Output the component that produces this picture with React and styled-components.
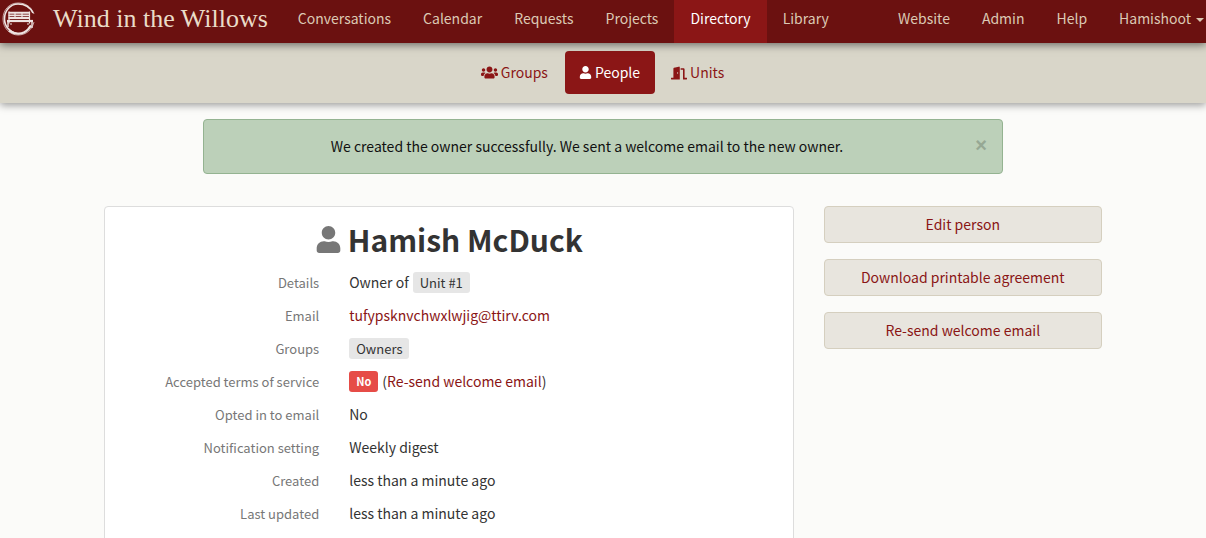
import React from "react";
import styled, { createGlobalStyle } from "styled-components";
import { FaUser, FaUsers, FaDoorOpen } from "react-icons/fa";

const GlobalStyle = createGlobalStyle`
  *, *::before, *::after { box-sizing: border-box; }
  body {
    margin: 0;
    background: #fbfbf9;
    color: #333;
    font-family: "Noto Sans CJK SC", "Noto Sans", sans-serif;
    font-size: 14px;
    line-height: 25px;
  }
  a { color: #8a1515; text-decoration: none; }
`;

const NavBar = styled.nav`
  position: relative;
  z-index: 2;
  display: flex;
  align-items: stretch;
  height: 43px;
  background: #6b1110;
  box-shadow: 0 2px 8px rgba(0, 0, 0, 0.5);
`;

const Brand = styled.a`
  display: flex;
  align-items: center;
  gap: 17px;
  padding: 0 14px 6px 2px;
  color: #eadcc8;
  font-family: "Liberation Serif", serif;
  font-size: 26px;
  line-height: 36px;
  white-space: nowrap;
`;

const NavGroup = styled.div`
  display: flex;
  margin-left: ${(p) => (p.$end ? "auto" : "0")};
`;

const NavLink = styled.a`
  display: flex;
  align-items: center;
  padding: 0 16px 6px;
  color: ${(p) => (p.$active ? "#fff" : "#dcc9b4")};
  background: ${(p) => (p.$active ? "#8b1616" : "transparent")};
  white-space: nowrap;
`;

const MenuButton = styled.button`
  display: flex;
  align-items: center;
  gap: 5px;
  padding: 0 2px 6px 16px;
  border: 0;
  background: transparent;
  color: #dcc9b4;
  font: inherit;
`;

const Caret = styled.span`
  border: 4px solid transparent;
  border-top-color: currentColor;
  border-bottom: 0;
  margin-top: 2px;
`;

const SubNav = styled.nav`
  display: flex;
  justify-content: center;
  gap: 2px;
  padding: 8px 0 9px;
  background: #d9d6c9;
  box-shadow: 0 2px 8px rgba(0, 0, 0, 0.4);
`;

const SubLink = styled.a`
  display: flex;
  align-items: center;
  gap: 3px;
  height: 43px;
  padding: 0 15px 0 14px;
  border-radius: 4px;
  color: ${(p) => (p.$active ? "#fff" : "#8b1616")};
  background: ${(p) => (p.$active ? "#8b1616" : "transparent")};
`;

const Alert = styled.div`
  display: flex;
  align-items: center;
  max-width: 800px;
  margin: 16px auto 32px;
  padding: 14px 10px 14px 0;
  border: 1px solid #94b391;
  border-radius: 4px;
  background: #bcd0b9;
  color: #111;
`;

const AlertText = styled.span`
  flex: 1;
  text-align: center;
`;

const CloseButton = styled.button`
  width: 22px;
  padding: 0 0 4px;
  border: 0;
  background: transparent;
  color: #96a894;
  font-family: "Liberation Sans", sans-serif;
  font-weight: 700;
  font-size: 20px;
  line-height: 20px;
`;

const Container = styled.main`
  display: grid;
  grid-template-columns: minmax(0, 7fr) minmax(0, 3fr);
  max-width: 1028px;
  margin: 0 auto;
`;

const Column = styled.div`
  padding: 0 15px;
`;

const Card = styled.section`
  padding: 12px 0 24px;
  border: 1px solid #ddd;
  border-radius: 4px;
  background: #fff;
`;

const Title = styled.h1`
  display: flex;
  align-items: center;
  justify-content: center;
  gap: 6px;
  margin: 0 0 11px;
  font-size: 30px;
  line-height: 40px;
  font-weight: 600;

  svg { color: #777; }
`;

const Details = styled.dl`
  margin: 0;
`;

const DetailRow = styled.div`
  display: grid;
  grid-template-columns: 1fr 2fr;
  align-items: center;
  margin-bottom: 8px;
`;

const Label = styled.dt`
  padding: 0 15px;
  color: #777;
  font-size: 13px;
  text-align: right;
`;

const Value = styled.dd`
  display: flex;
  align-items: center;
  gap: 4px;
  margin: 0;
  padding: 0 15px;
`;

const Badge = styled.span`
  padding: 0 7px;
  border-radius: 3px;
  background: ${(p) => (p.$danger ? "#e64c47" : "#e6e6e6")};
  color: ${(p) => (p.$danger ? "#fff" : "#333")};
  font-size: ${(p) => (p.$danger ? "11px" : "13px")};
  font-weight: ${(p) => (p.$danger ? "700" : "400")};
  line-height: 21px;
`;

const Actions = styled.div`
  display: grid;
  gap: 16px;
`;

const ActionButton = styled.button`
  height: 37px;
  padding: 0 12px;
  border: 1px solid #d5cfbf;
  border-radius: 4px;
  background: #e8e5de;
  color: #8a1515;
  font: inherit;
`;

const Logo = () => (
  <svg width="34" height="34" viewBox="0 0 34 34" fill="none" stroke="#eee4e2" aria-hidden="true">
    <path d="M32 12C29 4 23 1 16 1C7 1 1 8 1 17c0 9 7 16 15 16 8 0 14-5 16-13" strokeWidth="1" opacity="0.7" />
    <path d="M31 11C28 5 22 2 16 2C8 2 2.500 9 2.500 17c0 7 5 13 12 14.500" strokeWidth="1.600" />
    <path d="M7 28.500c6 4.500 14 4 19-1l3-4" strokeWidth="2.200" />
    <path d="M6.500 10.800h21M6.500 13.400h21M6.500 16h21" strokeWidth="1.900" />
    <path d="M7 9.500v12M13 10v7M20 10v7M27.500 9.500v12" strokeWidth="1.200" />
    <path d="M5 19h26" strokeWidth="2.200" />
    <path d="M6 18v7M30 18v8" strokeWidth="1.400" />
    <path d="M9 21v2M26 21v2" strokeWidth="1" />
  </svg>
);

const mainLinks = ["Conversations", "Calendar", "Requests", "Projects", "Directory", "Library"];
const sideLinks = ["Website", "Admin", "Help"];
const actions = ["Edit person", "Download printable agreement", "Re-send welcome email"];

const details = [
  ["Details", <>Owner of <Badge>Unit #1</Badge></>],
  ["Email", <a href="mailto:tufypsknvchwxlwjig@ttirv.com">tufypsknvchwxlwjig@ttirv.com</a>],
  ["Groups", <Badge>Owners</Badge>],
  ["Accepted terms of service", <><Badge $danger>No</Badge><span>(<a href="#resend">Re-send welcome email</a>)</span></>],
  ["Opted in to email", "No"],
  ["Notification setting", "Weekly digest"],
  ["Created", "less than a minute ago"],
  ["Last updated", "less than a minute ago"],
];

export default function App() {
  return (
    <>
      <GlobalStyle />
      <NavBar>
        <Brand href="#home"><Logo />Wind in the Willows</Brand>
        <NavGroup>
          {mainLinks.map((name) => (
            <NavLink key={name} href={`#${name}`} $active={name === "Directory"}>{name}</NavLink>
          ))}
        </NavGroup>
        <NavGroup $end>
          {sideLinks.map((name) => (
            <NavLink key={name} href={`#${name}`}>{name}</NavLink>
          ))}
          <MenuButton type="button">Hamishoot<Caret /></MenuButton>
        </NavGroup>
      </NavBar>
      <SubNav>
        <SubLink href="#groups"><FaUsers size={17} />Groups</SubLink>
        <SubLink href="#people" $active><FaUser size={13} />People</SubLink>
        <SubLink href="#units"><FaDoorOpen size={16} />Units</SubLink>
      </SubNav>
      <Alert role="status">
        <AlertText>We created the owner successfully. We sent a welcome email to the new owner.</AlertText>
        <CloseButton type="button" aria-label="Close">×</CloseButton>
      </Alert>
      <Container>
        <Column>
          <Card>
            <Title><FaUser size={27} />Hamish McDuck</Title>
            <Details>
              {details.map(([label, value]) => (
                <DetailRow key={label}>
                  <Label>{label}</Label>
                  <Value>{value}</Value>
                </DetailRow>
              ))}
            </Details>
          </Card>
        </Column>
        <Column>
          <Actions>
            {actions.map((name) => (
              <ActionButton key={name} type="button">{name}</ActionButton>
            ))}
          </Actions>
        </Column>
      </Container>
    </>
  );
}
